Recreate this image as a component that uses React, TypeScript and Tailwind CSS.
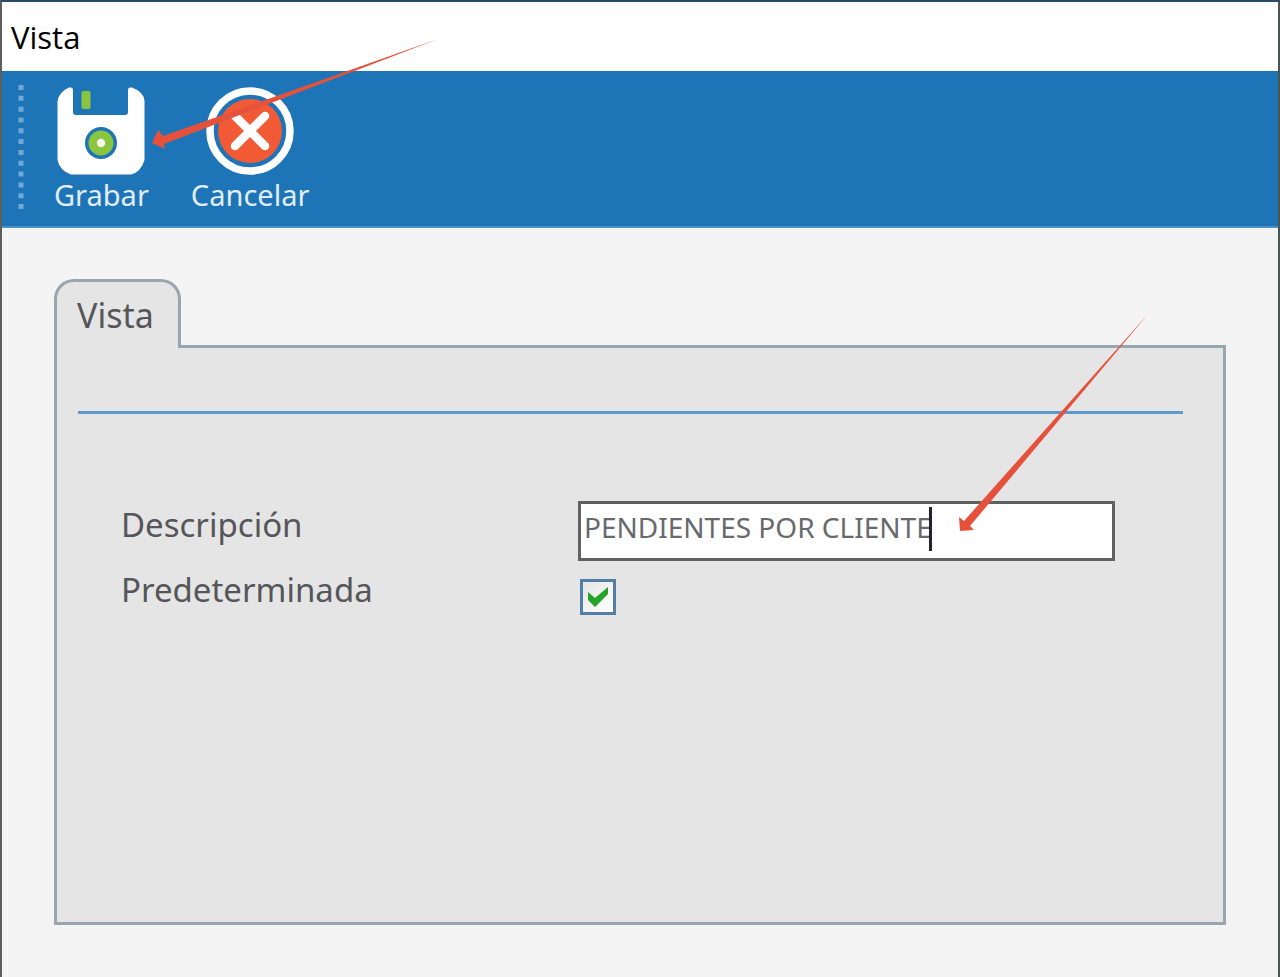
import { useState } from 'react';

function SaveIcon() {
  return (
    <svg viewBox="0 0 88 88" className="size-22" aria-hidden="true">
      <path
        fill="#fff"
        d="M12 0.500H14Q16 0.500 16 3V25Q16 28 19 28H68Q71 28 71 25V3Q71 0.500 73 0.500H75Q87 5 87.500 14V73Q84 85 74 87.500H14Q3 84 0.500 73V14Q2 5 12 0.500Z"
      />
      <rect x="24.500" y="4" width="9" height="18" rx="2" fill="#8bc53f" />
      <circle cx="44" cy="56" r="16" fill="#1d75b8" />
      <circle cx="44" cy="56" r="12.500" fill="#8bc53f" />
      <circle cx="44" cy="56" r="4.200" fill="#f4faec" />
    </svg>
  );
}

function CancelIcon() {
  return (
    <svg viewBox="0 0 88 88" className="size-22" aria-hidden="true">
      <circle cx="44" cy="44" r="40" fill="none" stroke="#fff" strokeWidth="7.500" />
      <circle cx="44" cy="44" r="32" fill="#f15a35" />
      <path d="M29 29L59 59M59 29L29 59" stroke="#fff" strokeWidth="8.500" strokeLinecap="round" />
    </svg>
  );
}

function ToolButton({ label, icon }: { label: string; icon: React.ReactNode }) {
  return (
    <button type="button" className="flex flex-col items-center text-[29px] leading-9 text-[#e1edf7]">
      {icon}
      <span className="mt-0.5">{label}</span>
    </button>
  );
}

export default function App() {
  const [description, setDescription] = useState('PENDIENTES POR CLIENTE');
  const [isDefault, setIsDefault] = useState(true);

  return (
    <div className="relative flex min-h-screen flex-col border-x-2 border-t-2 border-l-[#605f60] border-r-[#4b5355] border-t-[#284b66] bg-[#f4f4f4] font-['Noto_Sans',sans-serif] text-[#55565a]">
      <header className="flex h-[69px] items-center bg-white pl-[9px]">
        <h1 className="font-['Open_Sans',sans-serif] text-[31px] leading-10 text-black">Vista</h1>
      </header>

      <div className="flex h-[157px] border-b-2 border-[#4b91c6] bg-[#1d75b8] pt-[14px]" role="toolbar">
        <svg className="ml-4 h-[125px] w-[6px] shrink-0" aria-hidden="true">
          <path d="M3 0V125" stroke="#72a9d4" strokeWidth="5" strokeDasharray="5 5.820" />
        </svg>
        <div className="ml-[30px] flex gap-[42px] pt-0.5">
          <ToolButton label="Grabar" icon={<SaveIcon />} />
          <ToolButton label="Cancelar" icon={<CancelIcon />} />
        </div>
      </div>

      <main className="flex grow flex-col px-[52px] pt-[51px] pb-[52px]">
        <div className="z-10 -mb-[3px] flex">
          <button
            type="button"
            className="h-[69px] rounded-t-[20px] border-x-3 border-t-3 border-[#98a7ad] bg-[#e5e5e5] pr-6 pl-5 text-[34px] leading-10"
          >
            Vista
          </button>
        </div>
        <section className="grow border-3 border-[#98a7ad] bg-[#e5e5e5] pr-10 pl-[21px]">
          <hr className="mt-[63px] border-t-3 border-[#5c9bcb]" />
          <form className="mt-[87px] grid grid-cols-[457px_1fr] gap-y-[5px] pr-[68px] pl-[43px] text-[33px] leading-[48px]">
            <label htmlFor="description">Descripción</label>
            <div className="relative">
              <input
                id="description"
                type="text"
                value={description}
                onChange={(e) => setDescription(e.target.value)}
                className="block h-[60px] w-full border-3 border-[#616161] bg-white px-[3px] pb-2 text-[28px] text-[#68696d] outline-none"
              />
              <span className="absolute top-[6px] left-[351px] h-11 w-[3px] bg-[#242428]" />
            </div>
            <label htmlFor="default-view">Predeterminada</label>
            <div className="relative mt-[13px] ml-[2px] size-9">
              <input
                id="default-view"
                type="checkbox"
                checked={isDefault}
                onChange={(e) => setIsDefault(e.target.checked)}
                className="block size-9 appearance-none border-3 border-[#527fa6] bg-linear-to-br from-[#e5e5e5] to-white"
              />
              {isDefault && (
                <svg viewBox="0 0 36 36" className="pointer-events-none absolute inset-0" aria-hidden="true">
                  <path d="M8 13L15 19L28 8V15L15 28L8 21Z" fill="#26a329" />
                </svg>
              )}
            </div>
          </form>
        </section>
      </main>

      <svg viewBox="0 0 290 114" className="pointer-events-none absolute top-[36px] left-[149px] z-20 h-[114px] w-[290px]" aria-hidden="true">
        <path d="M287 1L12 98L7 92L1 105L14 111L13 106Z" fill="#e6513c" />
      </svg>
      <svg viewBox="0 0 192 222" className="pointer-events-none absolute top-[310px] left-[957px] z-20 h-[222px] w-[192px]" aria-hidden="true">
        <path d="M190 1L5 209L0 205L1 219L15 218L11 214Z" fill="#e6513c" />
      </svg>
    </div>
  );
}
